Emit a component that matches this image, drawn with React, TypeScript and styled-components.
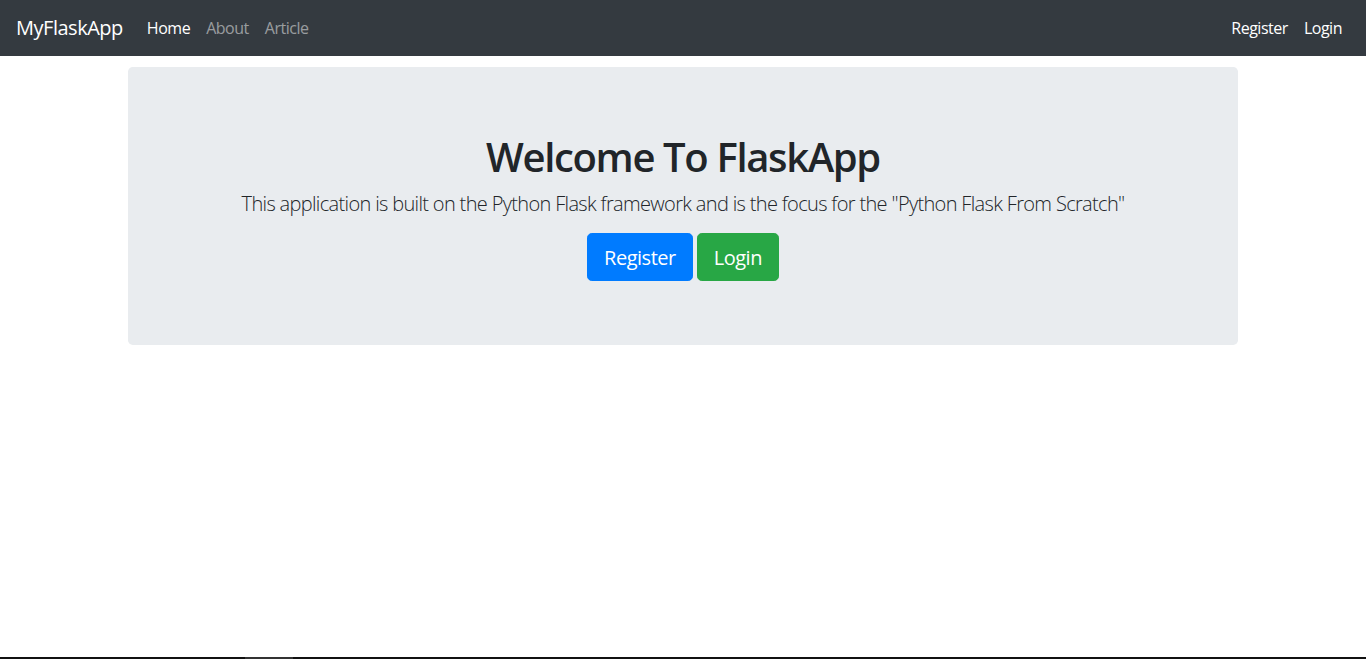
import React from "react";
import styled, { createGlobalStyle } from "styled-components";

const Global = createGlobalStyle`
  html, body { margin: 0; padding: 0; }
  body {
    font-family: "Open Sans", "Noto Sans", sans-serif;
    font-size: 16px;
    line-height: 1.5;
    letter-spacing: -0.03em;
    color: #212529;
    background: #fff;
  }
  * { box-sizing: border-box; }
`;

const Navbar = styled.nav`
  height: 56px;
  background: #343a40;
  display: flex;
  align-items: center;
  justify-content: space-between;
  padding: 8px 16px;
`;

const Left = styled.div`
  display: flex;
  align-items: center;
`;

const Brand = styled.a`
  font-size: 20px;
  line-height: 30px;
  color: #fff;
  text-decoration: none;
  margin-right: 16px;
  white-space: nowrap;
`;

const NavList = styled.ul`
  display: flex;
  list-style: none;
  margin: 0;
  padding: 0;
`;

const NavLink = styled.a<{ $active?: boolean }>`
  display: block;
  padding: 8px;
  font-size: 16px;
  line-height: 24px;
  color: ${(p) => (p.$active ? "#fff" : "rgba(255,255,255,0.5)")};
  text-decoration: none;
`;

const Container = styled.main`
  width: 1140px;
  margin: 0 auto;
  padding: 11px 15px 0;
`;

const Jumbotron = styled.section`
  background: #e9ecef;
  border-radius: 4.8px;
  padding: 64px 32px;
  margin-bottom: 32px;
  text-align: center;
`;

const Title = styled.h1`
  margin: 0 0 8px;
  padding-top: 2px;
  height: 48px;
  font-size: 40px;
  line-height: 48px;
  font-weight: 600;
  letter-spacing: -0.034em;
`;

const Lead = styled.p`
  margin: 0 0 16px;
  padding-top: 2px;
  height: 30px;
  font-size: 20px;
  line-height: 30px;
  font-weight: 300;
  letter-spacing: -0.033em;
`;

const Actions = styled.div`
  display: flex;
  justify-content: center;
  gap: 4px;
`;

const Button = styled.a<{ $bg: string }>`
  display: inline-block;
  padding: 9px 16px 7px;
  font-size: 20px;
  line-height: 30px;
  border-radius: 4.8px;
  color: #fff;
  background: ${(p) => p.$bg};
  border: 1px solid ${(p) => p.$bg};
  text-decoration: none;
`;

const ScrollBar = styled.div`
  position: fixed;
  left: 0;
  right: 0;
  bottom: 0;
  height: 2px;
  background: #111;
`;

const Thumb = styled.div`
  margin-left: 245px;
  width: 48px;
  height: 2px;
  background: #333;
`;

export default function App() {
  return (
    <>
      <Global />
      <Navbar>
        <Left>
          <Brand href="#">MyFlaskApp</Brand>
          <NavList>
            <li><NavLink href="#" $active>Home</NavLink></li>
            <li><NavLink href="#">About</NavLink></li>
            <li><NavLink href="#">Article</NavLink></li>
          </NavList>
        </Left>
        <NavList>
          <li><NavLink href="#" $active>Register</NavLink></li>
          <li><NavLink href="#" $active>Login</NavLink></li>
        </NavList>
      </Navbar>
      <Container>
        <Jumbotron>
          <Title>Welcome To FlaskApp</Title>
          <Lead>
            This application is built on the Python Flask framework and is the focus for the "Python Flask From Scratch"
          </Lead>
          <Actions>
            <Button href="#" $bg="#007bff">Register</Button>
            <Button href="#" $bg="#28a745">Login</Button>
          </Actions>
        </Jumbotron>
      </Container>
      <ScrollBar><Thumb /></ScrollBar>
    </>
  );
}
